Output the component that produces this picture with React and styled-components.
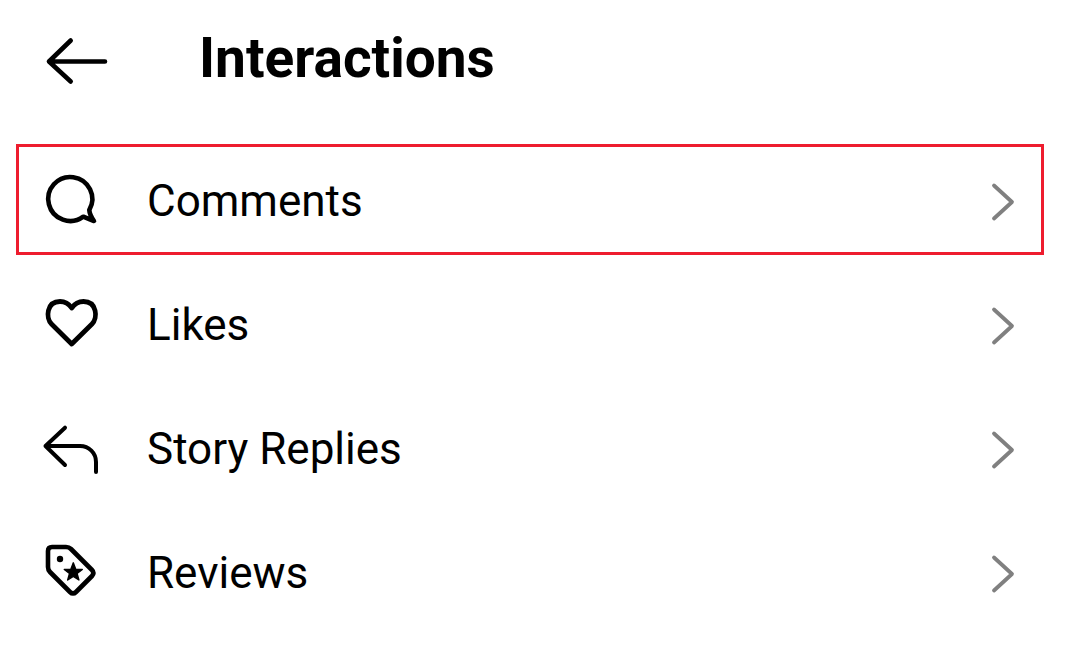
import React from "react";
import styled, { createGlobalStyle } from "styled-components";

const GlobalStyle = createGlobalStyle`
    html, body {
        margin: 0;
        padding: 0;
        background: #ffffff;
    }
    body {
        font-family: Roboto, "Liberation Sans", sans-serif;
        color: #000000;
    }
`;

const Page = styled.div`
    width: 1079px;
    height: 666px;
    overflow: hidden;
    background: #ffffff;
`;

const Header = styled.header`
    height: 122px;
    display: flex;
    align-items: center;
    padding-left: 42px;
`;

const BackButton = styled.div`
    width: 70px;
    height: 60px;
    margin-right: 87px;
    flex: none;
`;

const Title = styled.h1`
    margin: 0 0 6px;
    font-size: 55px;
    line-height: 60px;
    font-weight: 700;
    color: #000000;
`;

const List = styled.ul`
    list-style: none;
    margin: 17px 0 0;
    padding: 0;
`;

const Row = styled.li`
    position: relative;
    height: 124px;
    display: flex;
    align-items: center;
    padding: 0 59px 0 42px;
    box-sizing: border-box;

    ${(props) =>
        props.$highlighted &&
        `
        &::after {
            content: "";
            position: absolute;
            left: 16px;
            right: 35px;
            top: 5px;
            height: 111px;
            box-sizing: border-box;
            border: 3px solid #ee1c2e;
        }
        `}
`;

const RowIcon = styled.div`
    width: 60px;
    height: 60px;
    flex: none;
    margin-right: 45px;
`;

const Label = styled.span`
    flex: 1;
    font-size: 44px;
    line-height: 60px;
    font-weight: 400;
    color: #000000;
`;

const Chevron = styled.svg`
    width: 30px;
    height: 40px;
    flex: none;
    display: block;
    margin-top: 2px;
`;

const Glyph = styled.svg`
    width: 100%;
    height: 100%;
    display: block;
    fill: none;
    stroke: #000000;
    stroke-width: ${(props) => props.$weight || 4}px;
    stroke-linecap: round;
    stroke-linejoin: round;
`;

const CommentIcon = () => (
    <Glyph viewBox="0 0 60 60" $weight={4.6}>
        <path d="M41.3 45.7A22 22 0 1 1 47.3 39Q47.6 44 52 50Q46 47.8 41.3 45.7Z" />
    </Glyph>
);

const HeartIcon = () => (
    <Glyph viewBox="0 0 60 60" $weight={4.8}>
        <path d="M29.7 49L9.5 29C3.5 23 4.5 6.5 18 6.5C23 6.5 27 9 29.7 13C32.5 9 36.5 6.5 41.5 6.5C55 6.5 56 23 50 29Z" />
    </Glyph>
);

const ReplyIcon = () => (
    <Glyph viewBox="0 0 60 60" $weight={4}>
        <path d="M23 8.7L3.5 27L23 46M3.5 27H38C47 27 54 34 54 43V53" />
    </Glyph>
);

const ReviewIcon = () => (
    <Glyph viewBox="0 0 60 60" $weight={4.6}>
        <path d="M10 4H24Q27 4 29 6L50 27Q53 30 50 33L34 49Q31 52 28 49L8 29Q6 27 6 24V8Q6 4 10 4Z" />
        <circle cx="18" cy="16" r="3.2" fill="#000000" stroke="none" />
        <polygon
            points="31.3,19.8 33.65,26.1 40.3,26.4 35.1,30.5 36.9,37 31.3,33.3 25.7,37 27.5,30.5 22.3,26.4 28.95,26.1"
            fill="#000000"
            stroke="#000000"
            strokeWidth="1.4"
        />
    </Glyph>
);

const items = [
    { label: "Comments", icon: <CommentIcon />, highlighted: true },
    { label: "Likes", icon: <HeartIcon /> },
    { label: "Story Replies", icon: <ReplyIcon /> },
    { label: "Reviews", icon: <ReviewIcon /> },
];

export default function App() {
    return (
        <Page>
            <GlobalStyle />
            <Header>
                <BackButton>
                    <Glyph viewBox="0 0 70 60" $weight={4.6}>
                        <path d="M28.7 9.5L7 30.5L28.7 50.5M7 30.5H63" />
                    </Glyph>
                </BackButton>
                <Title>Interactions</Title>
            </Header>
            <List>
                {items.map((item) => (
                    <Row key={item.label} $highlighted={item.highlighted}>
                        <RowIcon>{item.icon}</RowIcon>
                        <Label>{item.label}</Label>
                        <Chevron viewBox="0 0 30 40">
                            <path
                                d="M4 3.5L22 20L4 36.5"
                                fill="none"
                                stroke="#808080"
                                strokeWidth="3.8"
                                strokeLinecap="round"
                                strokeLinejoin="round"
                            />
                        </Chevron>
                    </Row>
                ))}
            </List>
        </Page>
    );
}
